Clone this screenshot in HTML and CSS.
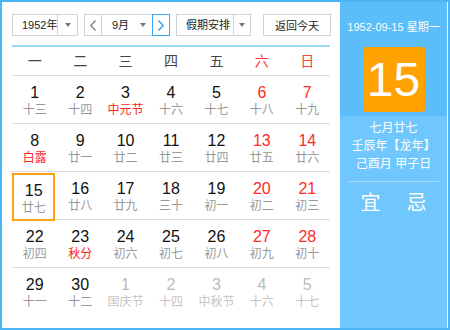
FILE: index.html
```html
<!DOCTYPE html>
<html lang="zh-CN">
<head>
  <meta charset="UTF-8" />
  <title>万年历</title>
  <link rel="stylesheet" href="styles.css">
</head>
<body>
  <div class="calendar">
    <!-- Left: month grid -->
    <div class="main">
      <div class="toolbar">
        <div class="select year-select">
          <span class="select-text">1952年</span>
          <span class="select-arrow"><i class="caret"></i></span>
        </div>
        <div class="month-group">
          <span class="nav-btn">
            <svg width="6" height="11" viewBox="0 0 6 11"><polyline points="5.5,0.5 0.8,5.5 5.5,10.5" fill="none" stroke="#777" stroke-width="1.2"/></svg>
          </span>
          <div class="select month-select">
            <span class="select-text">9月</span>
            <span class="select-arrow"><i class="caret"></i></span>
          </div>
          <span class="nav-btn active">
            <svg width="6" height="11" viewBox="0 0 6 11"><polyline points="0.5,0.5 5.2,5.5 0.5,10.5" fill="none" stroke="#1e9cf0" stroke-width="1.3"/></svg>
          </span>
        </div>
        <div class="select holiday-select">
          <span class="select-text">假期安排</span>
          <span class="select-arrow"><i class="caret"></i></span>
        </div>
        <button class="today-btn">返回今天</button>
      </div>

      <div class="weekdays">
        <span>一</span><span>二</span><span>三</span><span>四</span><span>五</span>
        <span class="weekend">六</span><span class="weekend">日</span>
      </div>

      <div class="days">
        <div class="week">
          <div class="day"><b>1</b><small>十三</small></div>
          <div class="day"><b>2</b><small>十四</small></div>
          <div class="day"><b>3</b><small class="fest">中元节</small></div>
          <div class="day"><b>4</b><small>十六</small></div>
          <div class="day"><b>5</b><small>十七</small></div>
          <div class="day weekend"><b>6</b><small>十八</small></div>
          <div class="day weekend"><b>7</b><small>十九</small></div>
        </div>
        <div class="week">
          <div class="day"><b>8</b><small class="fest">白露</small></div>
          <div class="day"><b>9</b><small>廿一</small></div>
          <div class="day"><b>10</b><small>廿二</small></div>
          <div class="day"><b>11</b><small>廿三</small></div>
          <div class="day"><b>12</b><small>廿四</small></div>
          <div class="day weekend"><b>13</b><small>廿五</small></div>
          <div class="day weekend"><b>14</b><small>廿六</small></div>
        </div>
        <div class="week">
          <div class="day selected"><b>15</b><small>廿七</small></div>
          <div class="day"><b>16</b><small>廿八</small></div>
          <div class="day"><b>17</b><small>廿九</small></div>
          <div class="day"><b>18</b><small>三十</small></div>
          <div class="day"><b>19</b><small>初一</small></div>
          <div class="day weekend"><b>20</b><small>初二</small></div>
          <div class="day weekend"><b>21</b><small>初三</small></div>
        </div>
        <div class="week">
          <div class="day"><b>22</b><small>初四</small></div>
          <div class="day"><b>23</b><small class="fest">秋分</small></div>
          <div class="day"><b>24</b><small>初六</small></div>
          <div class="day"><b>25</b><small>初七</small></div>
          <div class="day"><b>26</b><small>初八</small></div>
          <div class="day weekend"><b>27</b><small>初九</small></div>
          <div class="day weekend"><b>28</b><small>初十</small></div>
        </div>
        <div class="week">
          <div class="day"><b>29</b><small>十一</small></div>
          <div class="day"><b>30</b><small>十二</small></div>
          <div class="day other"><b>1</b><small>国庆节</small></div>
          <div class="day other"><b>2</b><small>十四</small></div>
          <div class="day other"><b>3</b><small>中秋节</small></div>
          <div class="day other"><b>4</b><small>十六</small></div>
          <div class="day other"><b>5</b><small>十七</small></div>
        </div>
      </div>
    </div>

    <!-- Right: selected day detail -->
    <div class="side">
      <div class="side-top">
        <div class="side-date">1952-09-15 星期一</div>
        <div class="big-day">15</div>
      </div>
      <div class="side-bottom">
        <div class="lunar">
          <p>七月廿七</p>
          <p>壬辰年【龙年】</p>
          <p>己酉月 甲子日</p>
        </div>
        <div class="yiji">
          <span>宜</span><span>忌</span>
        </div>
      </div>
    </div>
  </div>
</body>
</html>
```

FILE: styles.css
```css
body {
  margin: 0;
  font-family: 'Liberation Sans', 'Noto Sans CJK SC', sans-serif;
  background: #fff;
  color: #333;
}

.calendar {
  width: 450px;
  height: 330px;
  box-sizing: border-box;
  border: 2px solid #4cb5f5;
  display: flex;
}

/* Left part */
.main {
  flex: 1;
  padding: 12px 10px 0 10px;
}

.toolbar {
  display: flex;
  height: 22px;
  font-size: 11px;
  padding-bottom: 9px;
  border-bottom: 2px solid #9ed6f8;
}

.toolbar > * {
  flex: none;
}

.select {
  display: flex;
  height: 22px;
  box-sizing: border-box;
  border: 1px solid #d3d3d3;
  background: #fff;
}

.select-text {
  flex: 1;
  line-height: 20px;
  padding-left: 9px;
  color: #222;
  white-space: nowrap;
}

.select-arrow {
  width: 19px;
  flex: none;
  border-left: 1px solid #d3d3d3;
  display: flex;
  align-items: center;
  justify-content: center;
}

.caret {
  width: 0;
  height: 0;
  border-left: 3px solid transparent;
  border-right: 3px solid transparent;
  border-top: 4px solid #777;
}

.year-select {
  width: 66px;
}

.month-group {
  display: flex;
  margin-left: 6px;
}

.nav-btn {
  width: 18px;
  height: 22px;
  box-sizing: border-box;
  border: 1px solid #d3d3d3;
  display: flex;
  align-items: center;
  justify-content: center;
}

.nav-btn.active {
  border-color: #3aa6ee;
}

.month-select {
  width: 50px;
  border-left: none;
  border-right: none;
}

.month-select .select-text {
  padding-left: 10px;
}

.month-select .select-arrow {
  border-left: none;
}

.holiday-select {
  width: 75px;
  margin-left: 6px;
}

.holiday-select .select-arrow {
  width: 16px;
}

.today-btn {
  margin-left: auto;
  margin-right: -1px;
  width: 68px;
  height: 22px;
  padding: 0;
  border: 1px solid #d3d3d3;
  background: #fff;
  font-family: inherit;
  font-size: 11px;
  color: #222;
  white-space: nowrap;
}

.weekdays {
  display: grid;
  grid-template-columns: repeat(7, 1fr);
  height: 28px;
  line-height: 28px;
  text-align: center;
  font-size: 14px;
  color: #444;
  border-bottom: 1px solid #ddd;
}

.weekdays .weekend {
  color: #ff3b3b;
}

.week {
  display: grid;
  grid-template-columns: repeat(7, 1fr);
  height: 48px;
  box-sizing: border-box;
  border-bottom: 1px solid #ddd;
}

.week:last-child {
  border-bottom: none;
}

.day {
  display: flex;
  flex-direction: column;
  align-items: center;
  padding-top: 8px;
  box-sizing: border-box;
}

.day b {
  font-weight: normal;
  font-size: 16px;
  line-height: 18px;
  color: #111;
}

.day small {
  font-size: 12px;
  line-height: 17px;
  color: #999;
}

.day.weekend b {
  color: #ff2a2a;
}

.day small.fest {
  color: #f22;
}

.day.other b {
  color: #bbb;
}

.day.other small {
  color: #c4c4c4;
}

.day.selected {
  margin-top: 1px;
  margin-right: 2px;
  height: 48px;
  border: 2px solid #ffa310;
  padding-top: 7px;
}

/* Right panel */
.side {
  width: 107px;
  margin-right: 1px;
  color: #fff;
  text-align: center;
  display: flex;
  flex-direction: column;
}

.side-top {
  background: #5bbdf9;
  height: 114px;
  padding-top: 18px;
  box-sizing: border-box;
}

.side-date {
  font-size: 11px;
  line-height: 15px;
  white-space: nowrap;
}

.big-day {
  width: 62px;
  height: 65px;
  margin: 12px auto 0;
  background: #ffa200;
  border-radius: 3px;
  font-size: 48px;
  line-height: 65px;
}

.side-bottom {
  flex: 1;
  background: #6fc7fe;
  padding: 3px 8px 0;
}

.lunar {
  padding-bottom: 8px;
  border-bottom: 1px solid #a8dcfd;
}

.lunar p {
  margin: 0;
  font-size: 12px;
  line-height: 18px;
}

.yiji {
  display: flex;
  justify-content: center;
  gap: 26px;
  padding-top: 9px;
  font-size: 20px;
  line-height: 24px;
}
```
